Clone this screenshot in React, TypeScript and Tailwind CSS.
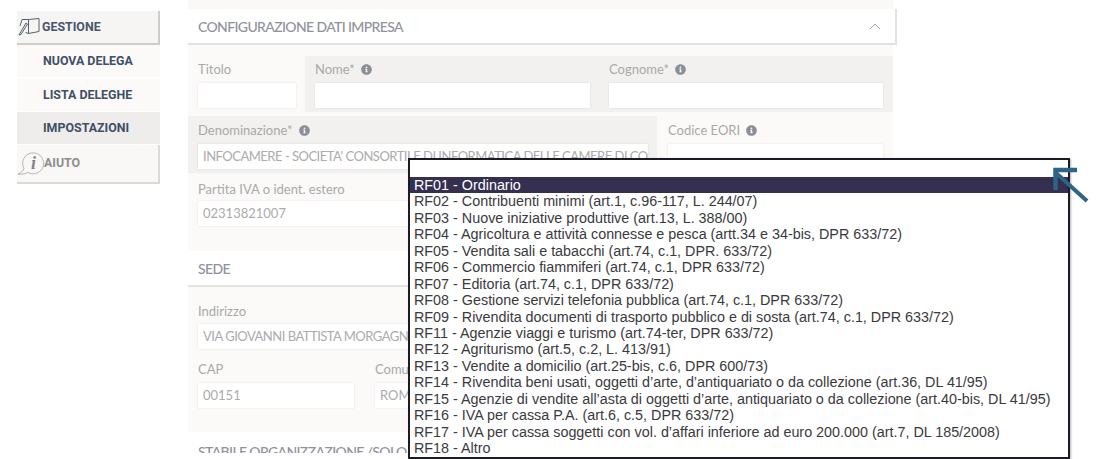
import React from 'react';
import { FaInfoCircle } from 'react-icons/fa';

const options = [
  'RF01 - Ordinario',
  'RF02 - Contribuenti minimi (art.1, c.96-117, L. 244/07)',
  'RF03 - Nuove iniziative produttive (art.13, L. 388/00)',
  'RF04 - Agricoltura e attività connesse e pesca (artt.34 e 34-bis, DPR 633/72)',
  'RF05 - Vendita sali e tabacchi (art.74, c.1, DPR. 633/72)',
  'RF06 - Commercio fiammiferi (art.74, c.1, DPR 633/72)',
  'RF07 - Editoria (art.74, c.1, DPR 633/72)',
  'RF08 - Gestione servizi telefonia pubblica (art.74, c.1, DPR 633/72)',
  'RF09 - Rivendita documenti di trasporto pubblico e di sosta (art.74, c.1, DPR 633/72)',
  'RF11 - Agenzie viaggi e turismo (art.74-ter, DPR 633/72)',
  'RF12 - Agriturismo (art.5, c.2, L. 413/91)',
  'RF13 - Vendite a domicilio (art.25-bis, c.6, DPR 600/73)',
  'RF14 - Rivendita beni usati, oggetti d’arte, d’antiquariato o da collezione (art.36, DL 41/95)',
  'RF15 - Agenzie di vendite all’asta di oggetti d’arte, antiquariato o da collezione (art.40-bis, DL 41/95)',
  'RF16 - IVA per cassa P.A. (art.6, c.5, DPR 633/72)',
  'RF17 - IVA per cassa soggetti con vol. d’affari inferiore ad euro 200.000 (art.7, DL 185/2008)',
  'RF18 - Altro',
];

function Label({ text, info }: { text: string; info?: boolean }) {
  return (
    <div className="flex h-[17px] items-center whitespace-nowrap text-[13px] leading-[17px] text-[#a9a9a9]">
      {text}
      {info && <FaInfoCircle className="ml-[6px] h-[11px] w-[11px] text-[#8a8f96]" />}
    </div>
  );
}

function Input({ value, className }: { value?: string; className?: string }) {
  return (
    <div
      className={`h-[25px] overflow-hidden whitespace-nowrap bg-white px-[5px] text-[13px] leading-[25px] text-[#ababab] shadow-[0_0_2px_rgba(0,0,0,0.1)] ${className ?? ''}`}
    >
      {value}
    </div>
  );
}

function MapIcon() {
  return (
    <svg width="22" height="20" viewBox="0 0 22 20" fill="none" stroke="#55606f" strokeWidth="1" className="ml-[1px] shrink-0">
      <path d="M4 2.5h6.5L21 1.5v13l-10.500 2-3-1" />
      <path d="M10.500 2.500v14" />
      <path d="M4 2.500 2 9" />
      <path d="M1 18 8 6l1.500 1-6.500 10.500Z" />
    </svg>
  );
}

function HelpIcon() {
  return (
    <svg width="28" height="26" viewBox="0 0 28 26" fill="none" className="shrink-0">
      <path d="M7 17.500A10.500 10.500 0 1 1 11 21.500C7 23 4 23.500 1 23 4 22 6 20 7 17.500Z" stroke="#a5a5a5" strokeWidth="0.8" />
      <text x="16.500" y="18" textAnchor="middle" fontFamily="Liberation Serif, serif" fontStyle="italic" fontWeight="700" fontSize="18" fill="#858585">i</text>
    </svg>
  );
}

function Sidebar() {
  return (
    <div className='mt-[11px] w-[143px] shrink-0 font-["Roboto",sans-serif] text-[12.4px] font-bold'>
      <div className="flex h-[34px] items-center border-r-2 border-b-2 border-[#cfcdca] bg-[#f7f5f3] text-[#45566e]">
        <MapIcon />
        <span className="ml-[2px]">GESTIONE</span>
      </div>
      <div className="flex h-[32px] items-center bg-[#fbfaf9] pl-[26px] text-[#3f4f67]">NUOVA DELEGA</div>
      <div className="mt-[2px] flex h-[32px] items-center bg-[#fbfaf9] pl-[26px] text-[#3f4f67]">LISTA DELEGHE</div>
      <div className="mt-[1px] flex h-[32px] items-center bg-[#eeedeb] pl-[26px] text-[#3f4f67]">IMPOSTAZIONI</div>
      <div className="mt-[1px] flex h-[39px] items-center border-r-2 border-b-2 border-[#dcdad7] bg-[#f9f8f6] text-[#8d8d8d]">
        <HelpIcon />
        <span className="ml-[-1px]">AIUTO</span>
      </div>
    </div>
  );
}

function SectionHeader({ title, withChevron }: { title: string; withChevron?: boolean }) {
  return (
    <div className="flex h-[36px] items-center justify-between border-b-2 border-[#e3e2df] pl-[10px] pr-[13px] text-[14px] font-medium tracking-[-0.63px] text-[#8f919c]">
      <span>{title}</span>
      {withChevron && (
        <svg width="14" height="8" viewBox="0 0 14 8" fill="none" stroke="#a8a8a8" strokeWidth="1">
          <path d="M2 7 7 2l5 5" />
        </svg>
      )}
    </div>
  );
}

export default function App() {
  return (
    <div className="relative h-[459px] w-[1097px] overflow-hidden bg-white">
      <div className='flex h-[453px] overflow-hidden pl-[17px] font-["Lato","Open_Sans",sans-serif]'>
        <Sidebar />
        <div className="ml-[28px] w-[709px] shrink-0">
          <div className="h-[9px] w-[705px] bg-[#faf9f8]" />
          <div className="border-r-2 border-[#e3e2df]">
            <SectionHeader title="CONFIGURAZIONE DATI IMPRESA" withChevron />
          </div>

          <div className="w-[705px] bg-[#fbfaf9] pt-[11px]">
            <div className="flex h-[56px]">
              <div className="w-[115px] px-[10px] pt-[5px]">
                <Label text="Titolo" />
                <Input className="mt-[5px] w-[98px]" />
              </div>
              <div className="ml-[2px] flex flex-1 gap-[19px] bg-[#f3f1ef] px-[10px] pt-[5px]">
                <div className="w-[275px]">
                  <Label text="Nome*" info />
                  <Input className="mt-[5px]" />
                </div>
                <div className="w-[274px]">
                  <Label text="Cognome*" info />
                  <Input className="mt-[5px]" />
                </div>
              </div>
            </div>

            <div className="mt-[4px] flex h-[57px]">
              <div className="w-[469px] bg-[#f3f1ef] pl-[10px] pr-[9px] pt-[6px]">
                <Label text="Denominazione*" info />
                <Input value="INFOCAMERE - SOCIETA' CONSORTILE DI INFORMATICA DELLE CAMERE DI COMMERCIO" className="mt-[5px] tracking-[-0.5px]" />
              </div>
              <div className="flex-1 pl-[11px] pr-[10px] pt-[6px]">
                <Label text="Codice EORI" info />
                <Input className="mt-[5px]" />
              </div>
            </div>

            <div className="h-[78px] pl-[10px] pt-[8px]">
              <Label text="Partita IVA o ident. estero" />
              <Input value="02313821007" className="mt-[3px] w-[300px]" />
            </div>
          </div>

          <div className="w-[705px]">
            <SectionHeader title="SEDE" />
          </div>

          <div className="h-[145px] w-[705px] bg-[#fbfaf9] px-[10px] pt-[16px]">
            <Label text="Indirizzo" />
            <Input value="VIA GIOVANNI BATTISTA MORGAGNI 13" className="mt-[4px] w-[400px] tracking-[-0.5px]" />
            <div className="mt-[12px] flex gap-[21px]">
              <div className="w-[156px]">
                <Label text="CAP" />
                <Input value="00151" className="mt-[5px]" />
              </div>
              <div className="w-[200px]">
                <Label text="Comune" />
                <Input value="ROMA" className="mt-[5px]" />
              </div>
            </div>
          </div>

          <div className="mt-[11px] whitespace-nowrap pl-[10px] text-[14px] font-medium leading-[18px] tracking-[-0.63px] text-[#8f919c]">
            STABILE ORGANIZZAZIONE /SOLO PER I NON RESIDENTI
          </div>
        </div>
      </div>

      {/* dropdown aperto sopra il form */}
      <div className='absolute left-[408px] top-[158px] h-[301px] w-[662px] overflow-hidden border-2 border-[#1c1b24] bg-white font-["Liberation_Sans",Arial,sans-serif] text-[14.35px] text-[#3a3a3e] shadow-[1px_1px_2px_rgba(0,0,0,0.3)]'>
        <div className="h-[17px]" />
        {options.map((o, i) => (
          <div
            key={o}
            className={`h-[16.44px] whitespace-nowrap pl-[4px] leading-[16.44px] ${i === 0 ? 'bg-[#352f50] text-white' : ''}`}
          >
            {o}
          </div>
        ))}
      </div>

      {/* freccia */}
      <svg width="44" height="44" viewBox="0 0 44 44" fill="none" className="absolute left-[1050px] top-[165px]">
        <path d="M37 36 5 7" stroke="#2e6486" strokeWidth="4" />
        <path d="M27 5H5.500v20" stroke="#2e6486" strokeWidth="4.500" />
      </svg>
    </div>
  );
}
